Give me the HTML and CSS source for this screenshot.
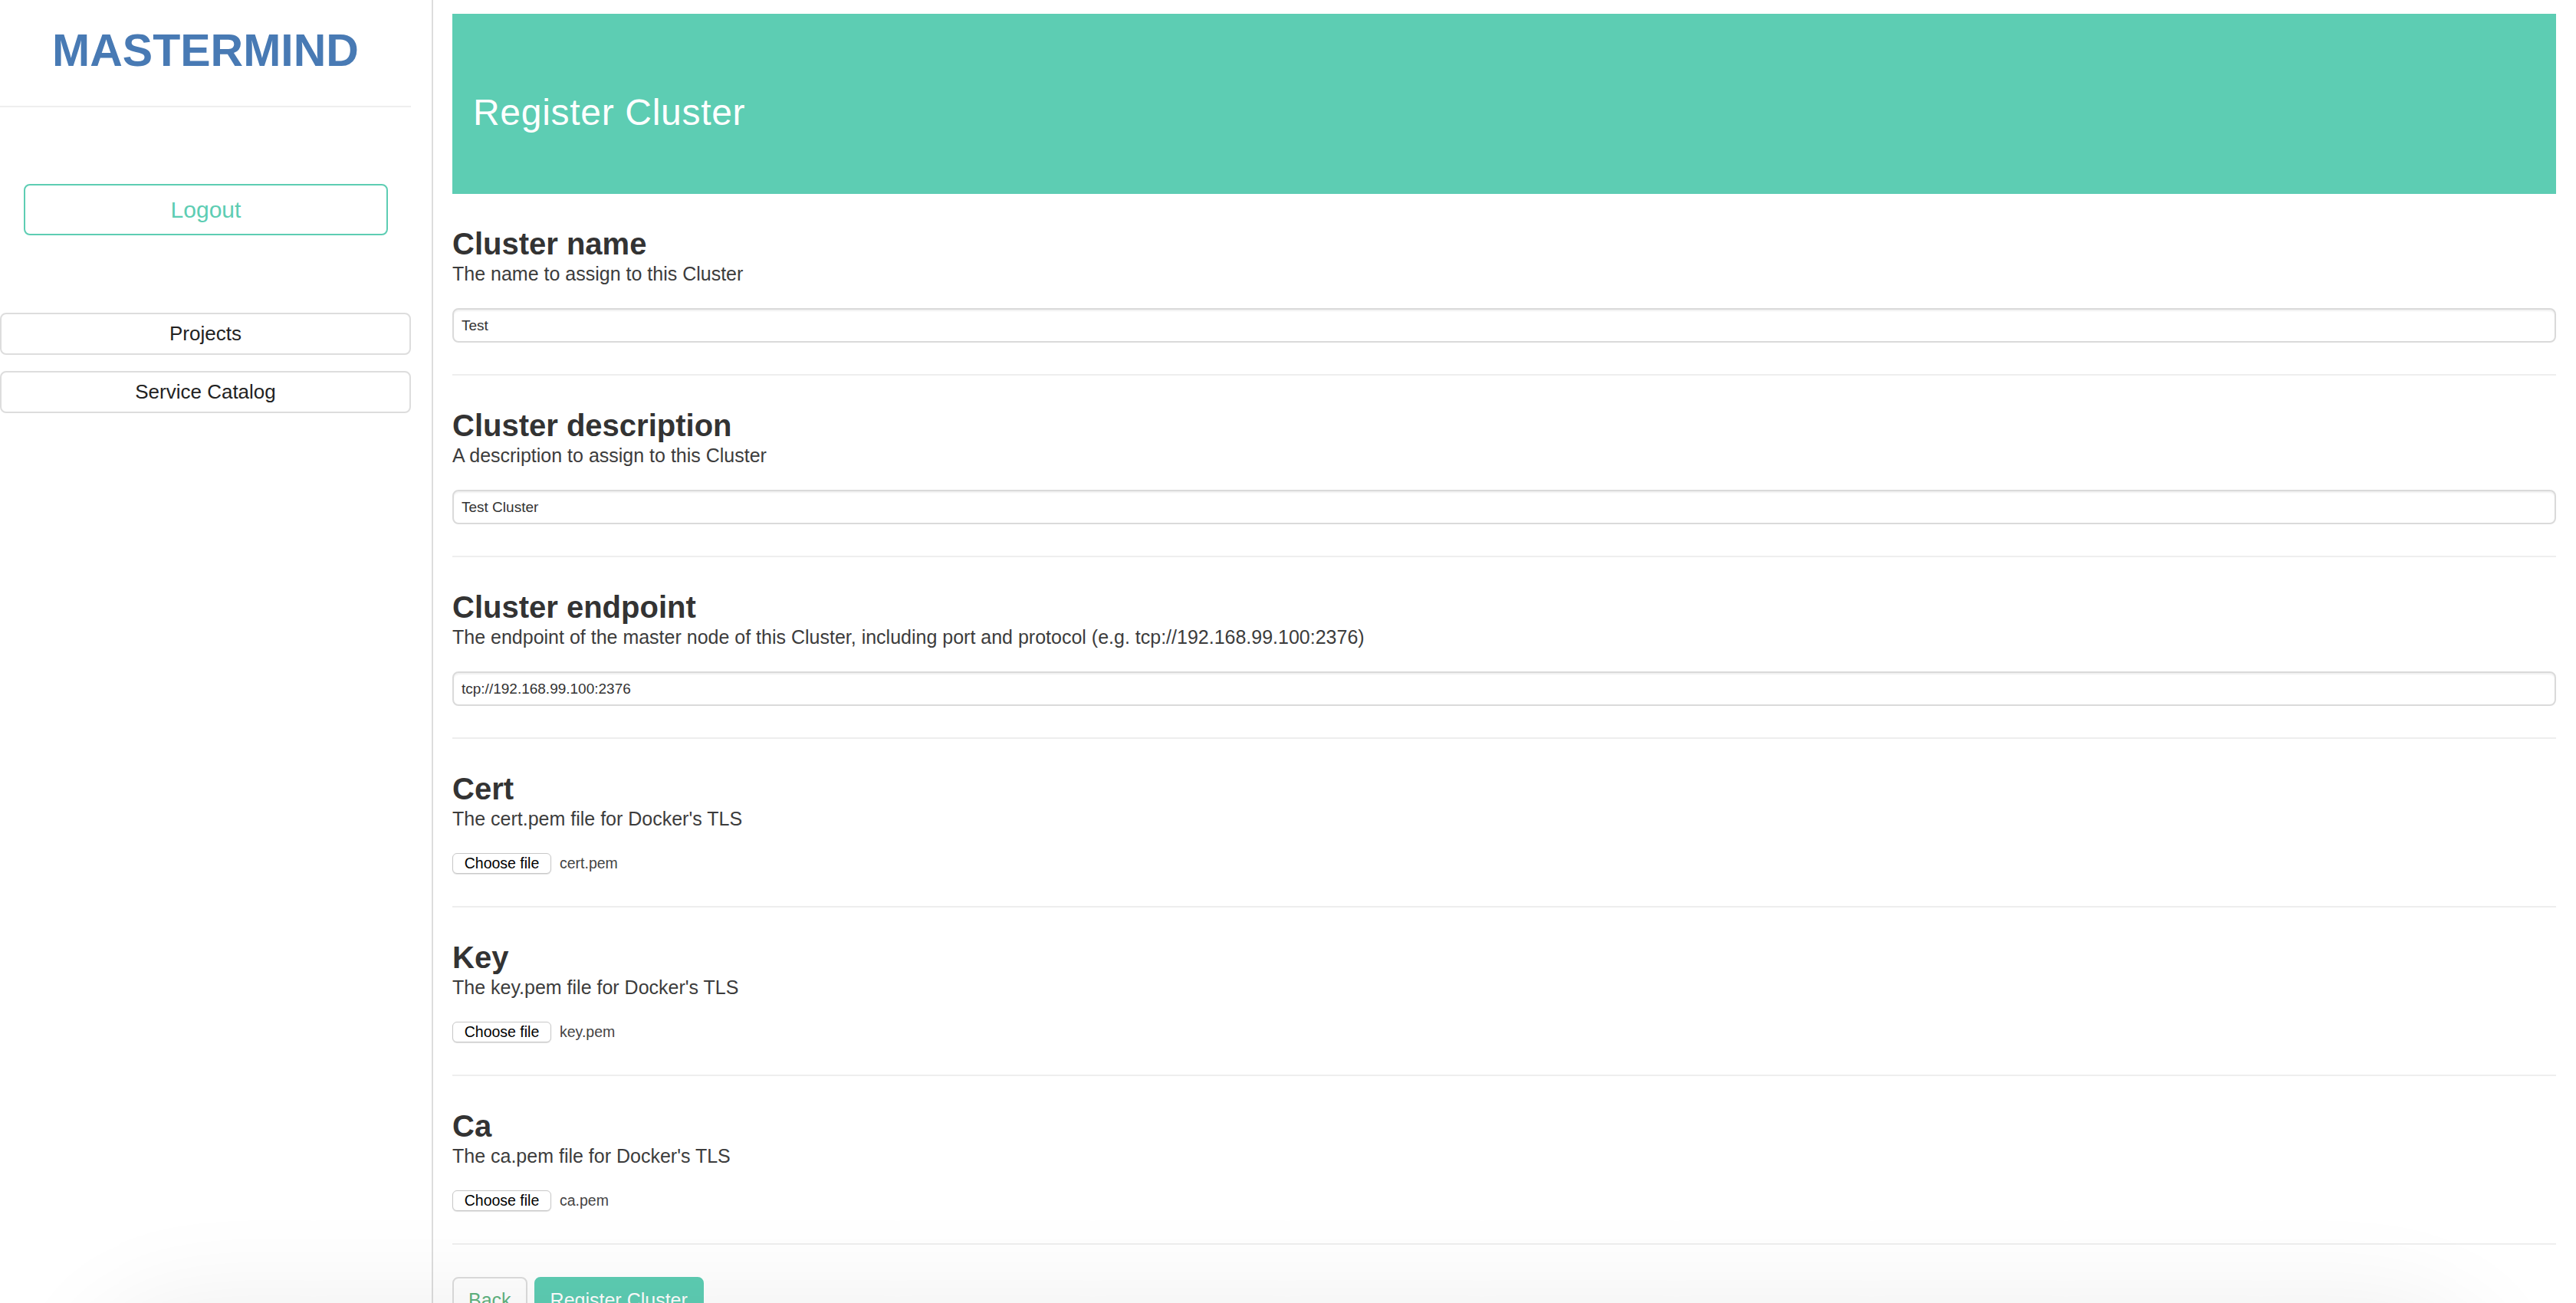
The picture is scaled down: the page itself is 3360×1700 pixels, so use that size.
FILE: index.html
```html
<!DOCTYPE html>
<html lang="en">
<head>
<meta charset="utf-8">
<title>Mastermind - Register Cluster</title>
<link rel="stylesheet" href="styles.css">
</head>
<body>
<div class="app">
  <aside class="sidebar">
    <div class="sidebar-inner">
      <div class="logo">MASTERMIND</div>
      <button class="btn-logout" type="button">Logout</button>
      <nav class="nav">
        <a class="nav-item" href="#">Projects</a>
        <a class="nav-item" href="#">Service Catalog</a>
      </nav>
    </div>
  </aside>
  <main class="main">
    <header class="page-header">
      <h1 class="page-title">Register Cluster</h1>
    </header>
    <form class="form">
      <section class="field">
        <h2 class="field-title">Cluster name</h2>
        <p class="field-desc">The name to assign to this Cluster</p>
        <input class="text-input" type="text" value="Test">
      </section>
      <section class="field">
        <h2 class="field-title">Cluster description</h2>
        <p class="field-desc">A description to assign to this Cluster</p>
        <input class="text-input" type="text" value="Test Cluster">
      </section>
      <section class="field">
        <h2 class="field-title">Cluster endpoint</h2>
        <p class="field-desc">The endpoint of the master node of this Cluster, including port and protocol (e.g. tcp://192.168.99.100:2376)</p>
        <input class="text-input" type="text" value="tcp://192.168.99.100:2376">
      </section>
      <section class="field field-file">
        <h2 class="field-title">Cert</h2>
        <p class="field-desc">The cert.pem file for Docker's TLS</p>
        <div class="file-row"><span class="file-btn">Choose file</span><span class="file-name">cert.pem</span></div>
      </section>
      <section class="field field-file">
        <h2 class="field-title">Key</h2>
        <p class="field-desc">The key.pem file for Docker's TLS</p>
        <div class="file-row"><span class="file-btn">Choose file</span><span class="file-name">key.pem</span></div>
      </section>
      <section class="field field-file">
        <h2 class="field-title">Ca</h2>
        <p class="field-desc">The ca.pem file for Docker's TLS</p>
        <div class="file-row"><span class="file-btn">Choose file</span><span class="file-name">ca.pem</span></div>
      </section>
      <div class="actions">
        <button class="btn btn-back" type="button">Back</button>
        <button class="btn btn-primary" type="button">Register Cluster</button>
      </div>
    </form>
  </main>
</div>
<div class="screen-shadow"></div>
</body>
</html>
```
FILE: styles.css
```css
html, body {
  margin: 0;
  padding: 0;
  background: #ffffff;
}

body {
  font-family: "Liberation Sans", Arial, Helvetica, sans-serif;
  color: #333333;
}

.app {
  display: flex;
  min-height: 100vh;
}

/* ---------- Sidebar ---------- */
.sidebar {
  width: 563px;
  flex: 0 0 563px;
  border-right: 2px solid #dddddd;
}

.sidebar-inner {
  width: 536px;
  display: flex;
  flex-direction: column;
}

.logo {
  padding: 36px 0 42px;
  border-bottom: 2px solid #eeeeee;
  text-align: center;
  font-size: 59px;
  line-height: 60px;
  font-weight: bold;
  color: #487ab4;
}

.btn-logout {
  margin: 100px 0 0 31px;
  width: 475px;
  height: 67px;
  box-sizing: border-box;
  border: 2px solid #5dcdb3;
  border-radius: 8px;
  background: #ffffff;
  color: #5dcdb3;
  font-family: inherit;
  font-size: 30px;
  padding: 0;
}

.nav {
  margin-top: 101px;
  display: flex;
  flex-direction: column;
  gap: 21px;
}

.nav-item {
  display: flex;
  align-items: center;
  justify-content: center;
  height: 55px;
  box-sizing: border-box;
  border: 2px solid #dddddd;
  border-radius: 8px;
  font-size: 26px;
  color: #222222;
  text-decoration: none;
}

/* ---------- Main ---------- */
.main {
  flex: 1;
  min-width: 0;
  padding: 18px 26px 0 25px;
}

.page-header {
  height: 235px;
  box-sizing: border-box;
  padding: 105px 27px 0;
  background: #5dcdb3;
}

.page-title {
  margin: 0;
  font-size: 48px;
  line-height: 48px;
  font-weight: 300;
  color: #ffffff;
  letter-spacing: 0.7px;
}

.field {
  padding: 42px 0 41px;
  border-bottom: 2px solid #eeeeee;
}

.field-file {
  padding-bottom: 42px;
}

.field-title {
  margin: 0;
  font-size: 40px;
  line-height: 46px;
  font-weight: bold;
  color: #333333;
}

.field-desc {
  margin: 0;
  font-size: 25px;
  line-height: 33px;
  color: #3c3c3c;
}

.text-input {
  display: block;
  margin-top: 28px;
  width: 100%;
  height: 45px;
  box-sizing: border-box;
  border: 2px solid #dadada;
  border-radius: 8px;
  padding: 0 10px;
  font-family: inherit;
  font-size: 19px;
  color: #333333;
  background: #ffffff;
  box-shadow: inset 0 2px 2px rgba(0, 0, 0, 0.06);
  outline: none;
}

.file-row {
  margin-top: 28px;
  height: 27px;
  display: flex;
  align-items: center;
  gap: 11px;
}

.file-btn {
  display: flex;
  align-items: center;
  justify-content: center;
  width: 129px;
  height: 27px;
  box-sizing: border-box;
  border: 1px solid #c8c8c8;
  border-radius: 6px;
  background: #ffffff;
  box-shadow: 0 1px 1px rgba(0, 0, 0, 0.12);
  font-size: 19.5px;
  color: #000000;
}

.file-name {
  font-size: 19.5px;
  color: #444444;
}

.actions {
  margin-top: 42px;
  display: flex;
  gap: 9px;
}

.btn {
  padding: 10px 19px 14px;
  line-height: 36px;
  font-family: inherit;
  font-size: 25px;
  border-radius: 8px;
  border: 2px solid #dddddd;
  background: #ffffff;
}

.btn-back {
  color: #5fb37f;
}

.btn-primary {
  background: #5dcdb3;
  border-color: #5dcdb3;
  color: #ffffff;
}

/* soft shadow cast over the bottom edge of the window */
.screen-shadow {
  position: fixed;
  left: 150px;
  right: 150px;
  top: 1740px;
  height: 200px;
  border-radius: 100px;
  box-shadow: 0 0 140px 40px rgba(0, 0, 0, 0.07);
  pointer-events: none;
}
```
